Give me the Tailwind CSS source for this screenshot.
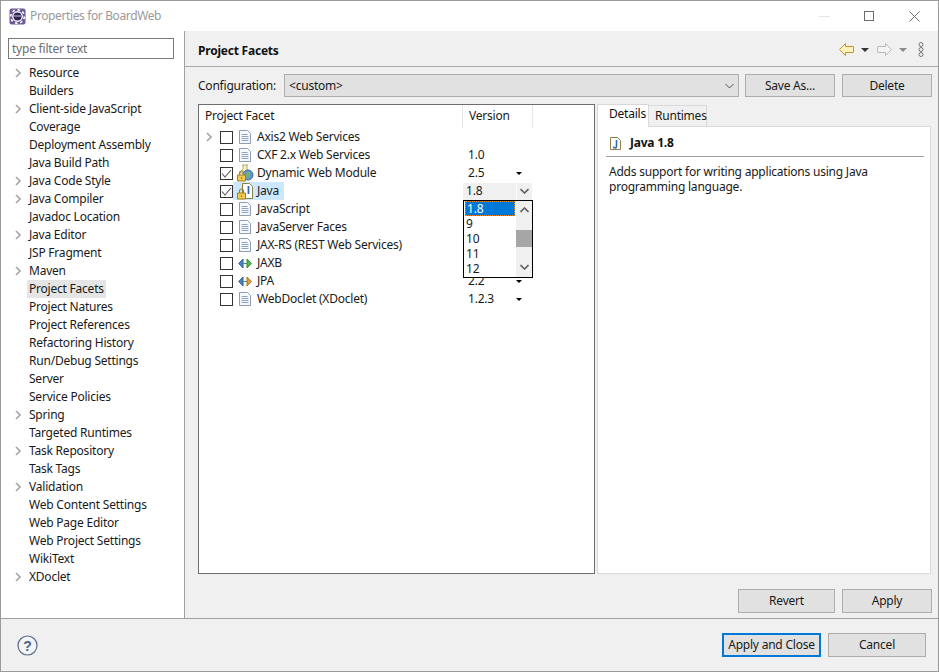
<!DOCTYPE html>
<html lang="en">
<head>
<meta charset="UTF-8">
<title>Properties for BoardWeb</title>
<script src="https://cdn.jsdelivr.net/npm/@tailwindcss/browser@4"></script>
</head>
<body class="bg-white">
<div class="w-[939px] h-[672px] flex flex-col border border-[#9a9a9a] overflow-hidden text-[12px] tracking-[-0.22px] leading-[18px] text-[#1a1a1a] font-['Noto_Sans','Open_Sans',sans-serif]">

  <!-- Title bar -->
  <div class="h-[30px] shrink-0 bg-white flex items-center pl-[8px]">
    <svg class="w-[17px] h-[17px]" viewBox="0 0 17 17">
      <rect x="0.500" y="0.500" width="16" height="16" rx="2" fill="#6a5a96"/>
      <circle cx="8.500" cy="8.500" r="6.800" fill="none" stroke="#fff" stroke-width="1.600" stroke-dasharray="2.500 2.800"/>
      <circle cx="8.500" cy="8.500" r="5.400" fill="#f4f4f8"/>
      <circle cx="8.500" cy="8.500" r="4" fill="#2c2550"/>
      <path d="M4.800 8h7.400" stroke="#9a94b8" stroke-width="1.500"/>
    </svg>
    <span class="ml-[4px] tracking-[-0.38px] text-[#9a9a9a]">Properties for BoardWeb</span>
    <div class="ml-auto flex items-center">
      <div class="w-[11px] h-px bg-[#e6e6e6] mr-[34px]"></div>
      <div class="w-[10px] h-[10px] border border-[#6e6e6e] mr-[35px]"></div>
      <svg class="w-[11px] h-[11px] mr-[18px]" viewBox="0 0 11 11"><path d="M.5.5l10 10M10.500.5l-10 10" stroke="#6e6e6e" fill="none"/></svg>
    </div>
  </div>

  <div class="flex-1 flex min-h-0">
    <!-- Left tree -->
    <div class="w-[184px] shrink-0 bg-white border-r border-[#a0a0a0] pt-[7px] px-[7px]">
      <div class="h-[21px] w-[166px] border border-[#7a7a7a] pl-[3px] flex items-center text-[#6d6d6d]">type filter text</div>
      <div id="tree" class="mt-[5px]"></div>
    </div>

    <!-- Right content -->
    <div class="flex-1 bg-[#f0f0f0] flex flex-col min-w-0">
      <div class="h-[36px] shrink-0 border-b border-[#a8a8a8] pl-[13px] flex items-center">
        <span class="mt-[4px] font-bold text-[#111]">Project Facets</span>
        <div class="ml-auto mt-[2px] flex items-center">
          <svg class="w-[15px] h-[13px]" viewBox="0 0 15 13"><path d="M6.500.5v3h7.500a.5.5 0 0 1 .5.5v5a.5.5 0 0 1-.5.5H6.500v3L.5 6.500z" fill="#fff3bd" stroke="#c9902a"/></svg>
          <div class="ml-[7px] w-0 h-0 border-x-[4px] border-x-transparent border-t-[4px] border-t-[#333]"></div>
          <svg class="ml-[8px] w-[15px] h-[13px]" viewBox="0 0 15 13"><path d="M8.500.5v3H1a.5.5 0 0 0-.5.5v5a.5.5 0 0 0 .5.5h7.500v3l6-6z" fill="#f3f3f3" stroke="#b8b8b8"/></svg>
          <div class="ml-[7px] w-0 h-0 border-x-[4px] border-x-transparent border-t-[4px] border-t-[#8a8a8a]"></div>
          <svg class="ml-[11px] mr-[14px] w-[6px] h-[15px]" viewBox="0 0 6 15" fill="none" stroke="#777"><circle cx="3" cy="2.500" r="2"/><circle cx="3" cy="7.500" r="2"/><circle cx="3" cy="12.500" r="2"/></svg>
        </div>
      </div>

      <div class="flex-1 min-h-0 flex flex-col pl-[13px] pr-[6px]">
        <!-- Configuration -->
        <div class="mt-[7px] h-[23px] shrink-0 flex items-center">
          <span class="w-[86px]">Configuration:</span>
          <div class="w-[455px] h-[23px] bg-[#e1e1e1] border border-[#adadad] pl-[4px] flex items-center">
            &lt;custom&gt;
            <svg class="ml-auto mr-[4px] w-[9px] h-[6px]" viewBox="0 0 9 6"><path d="M.5 1l4 4 4-4" stroke="#555" fill="none"/></svg>
          </div>
          <div class="ml-[6px] w-[90px] h-[23px] bg-[#e1e1e1] border border-[#adadad] flex items-center justify-center">Save As...</div>
          <div class="ml-[7px] w-[90px] h-[23px] bg-[#e1e1e1] border border-[#adadad] flex items-center justify-center">Delete</div>
        </div>

        <div class="mt-[7px] h-[470px] shrink-0 flex">
          <!-- Facet table -->
          <div class="relative w-[397px] h-[470px] bg-white border border-[#6e6e6e]">
            <div class="h-[23px] flex">
              <div class="w-[264px] h-full border-r border-[#e5e5e5] pl-[6px] pb-[2px] flex items-center">Project Facet</div>
              <div class="w-[70px] h-full border-r border-[#e5e5e5] pl-[6px] pb-[2px] flex items-center">Version</div>
            </div>
            <div id="rows"></div>

            <!-- open version dropdown -->
            <div class="absolute left-[264px] top-[95px] w-[70px] h-[78px] bg-white border border-black flex">
              <div class="w-[52px] pl-[1px] leading-[15px]">
                <div class="h-[15px] w-[50px] pl-[1px] bg-[#0078d7] text-white border border-dotted border-[#f08a24] flex items-center">1.8</div>
                <div class="pl-[1px]">9</div>
                <div class="pl-[1px]">10</div>
                <div class="pl-[1px]">11</div>
                <div class="pl-[1px]">12</div>
              </div>
              <div class="w-[16px] bg-[#f0f0f0] flex flex-col items-center">
                <svg class="mt-[6px] w-[9px] h-[6px]" viewBox="0 0 9 6"><path d="M.5 5l4-4 4 4" stroke="#606060" stroke-width="1.600" fill="none"/></svg>
                <div class="mt-[17px] w-full h-[17px] bg-[#a6a6a6]"></div>
                <svg class="mt-[17px] w-[9px] h-[6px]" viewBox="0 0 9 6"><path d="M.5 1l4 4 4-4" stroke="#606060" stroke-width="1.600" fill="none"/></svg>
              </div>
            </div>
          </div>

          <!-- Details panel -->
          <div class="ml-[2px] -mt-[1px] w-[334px] flex flex-col">
            <div class="h-[23px] flex items-end shrink-0">
              <div class="relative -mb-px w-[52px] h-[23px] bg-white border-t border-x border-[#d9d9d9] pl-[11px] pb-[5px] flex items-center text-[#111]">Details</div>
              <div class="w-[58px] h-[21px] border-t border-r border-[#d9d9d9] pl-[6px] flex items-center">Runtimes</div>
            </div>
            <div class="flex-1 bg-white border border-[#d9d9d9] pl-[8px] pr-[6px]">
              <div class="h-[30px] border-b border-[#a0a0a0] pt-[3px] flex items-center pl-[4px]">
                <svg class="w-[11px] h-[13px]" viewBox="0 0 11 13"><path d="M.5.5h7l3 3v9H.5z" fill="#fff" stroke="#8f8048"/><path d="M6.500 3v6.500a1.500 1.500 0 0 1-3 0" stroke="#2f6cb5" stroke-width="1.600" fill="none"/></svg>
                <span class="ml-[9px] font-bold text-[#111]">Java 1.8</span>
              </div>
              <p class="mt-[7px] ml-[3px] leading-[15px]">Adds support for writing applications using Java<br>programming language.</p>
            </div>
          </div>
        </div>

        <!-- Revert / Apply -->
        <div class="mt-[15px] h-[24px] shrink-0 flex justify-end">
          <div class="w-[97px] h-[24px] bg-[#e1e1e1] border border-[#adadad] flex items-center justify-center">Revert</div>
          <div class="ml-[7px] w-[90px] h-[24px] bg-[#e1e1e1] border border-[#adadad] flex items-center justify-center">Apply</div>
        </div>
      </div>
    </div>
  </div>

  <!-- Bottom bar -->
  <div class="h-[53px] shrink-0 bg-[#f0f0f0] border-t border-[#a0a0a0] flex items-center pl-[16px] pr-[12px]">
    <svg class="w-[21px] h-[21px]" viewBox="0 0 21 21"><circle cx="10.500" cy="10.500" r="9.500" fill="#f4f4f6" stroke="#5b6c8c" stroke-width="1.200"/><text x="10.500" y="15.500" text-anchor="middle" font-size="14" font-weight="700" font-family="Liberation Sans, sans-serif" fill="#4f6184">?</text></svg>
    <div class="ml-auto w-[99px] h-[24px] bg-[#e1e1e1] border-2 border-[#0078d7] flex items-center justify-center">Apply and Close</div>
    <div class="ml-[7px] w-[98px] h-[24px] bg-[#e1e1e1] border border-[#adadad] flex items-center justify-center">Cancel</div>
  </div>
</div>

<script>
  // Left tree entries: [label, has children]
  const treeItems = [
    ['Resource', true], ['Builders', false], ['Client-side JavaScript', true], ['Coverage', false],
    ['Deployment Assembly', false], ['Java Build Path', false], ['Java Code Style', true], ['Java Compiler', true],
    ['Javadoc Location', false], ['Java Editor', true], ['JSP Fragment', false], ['Maven', true],
    ['Project Facets', false], ['Project Natures', false], ['Project References', false], ['Refactoring History', false],
    ['Run/Debug Settings', false], ['Server', false], ['Service Policies', false], ['Spring', true],
    ['Targeted Runtimes', false], ['Task Repository', true], ['Task Tags', false], ['Validation', true],
    ['Web Content Settings', false], ['Web Page Editor', false], ['Web Project Settings', false], ['WikiText', false],
    ['XDoclet', true]
  ];

  const chevron = '<svg class="w-[7px] h-[10px]" viewBox="0 0 7 10"><path d="M1 1l4 4-4 4" stroke="#a6a6a6" stroke-width="1.700" fill="none"/></svg>';

  document.getElementById('tree').innerHTML = treeItems.map(([label, more]) => `
    <div class="h-[18px] flex items-center">
      <div class="w-[21px] pl-[7px] shrink-0">${more ? chevron : ''}</div>
      <span class="${label === 'Project Facets' ? 'bg-[#e5e5e5] px-[2px] -mx-[2px]' : ''}">${label}</span>
    </div>`).join('');

  const lock = '<path d="M.5 9.500h8v6h-8z" fill="#f0c94e" stroke="#a5801f"/><path d="M2.500 9.500V7.500a2 2 0 0 1 4 0v2" fill="none" stroke="#a5801f" stroke-width="1.200"/><path d="M4.500 11.500v2" stroke="#a5801f"/>';
  const icons = {
    doc: '<svg class="w-[12px] h-[14px]" viewBox="0 0 12 14"><path d="M.5.5h8l3 3v10H.5z" fill="#f7f9fc" stroke="#8c9db5"/><path d="M2.500 4.500h6M2.500 6.500h7M2.500 8.500h7M2.500 10.500h7" stroke="#8fa3c0"/></svg>',
    web: '<svg class="w-[18px] h-[18px]" viewBox="0 0 18 18"><path d="M6 1h6M7 1v3.500L4 9h10l-3-4.500V1" fill="#f6f0cf" stroke="#b5a86a"/><circle cx="12" cy="11" r="5" fill="#5e9cc9" stroke="#3d6d96"/><path d="M10 8.500h4l-1 5h-2z" fill="#7fb069"/><g transform="translate(1 1.500)">' + lock + '</g></svg>',
    java: '<svg class="w-[18px] h-[18px]" viewBox="0 0 18 18"><path d="M6.500 1.500h7l3 3v12h-10z" fill="#fff" stroke="#8f8048"/><path d="M12.500 4v8" stroke="#2f6cb5" stroke-width="1.800"/><g transform="translate(1 1.500)">' + lock + '</g></svg>',
    jaxb: '<svg class="w-[14px] h-[11px]" viewBox="0 0 14 11"><path d="M5 1L.7 5.500 5 10z" fill="#4a86c5" stroke="#2f6299"/><path d="M9 1l4.300 4.500L9 10z" fill="#4fc04a" stroke="#2f8f2a"/><path d="M5 5.500h4" stroke="#5a7a90"/></svg>',
    jpa: '<svg class="w-[14px] h-[11px]" viewBox="0 0 14 11"><path d="M5 1L.7 5.500 5 10z" fill="#4a86c5" stroke="#2f6299"/><path d="M9 1l4.300 4.500L9 10z" fill="#e5a33c" stroke="#a8741f"/><path d="M5 5.500h4" stroke="#5a7a90"/></svg>'
  };

  // Facet rows: label, icon, version, checked, has version caret
  const facets = [
    { label: 'Axis2 Web Services', icon: 'doc', expand: true },
    { label: 'CXF 2.x Web Services', icon: 'doc', version: '1.0' },
    { label: 'Dynamic Web Module', icon: 'web', version: '2.5', checked: true, caret: true },
    { label: 'Java', icon: 'java', version: '1.8', checked: true, active: true },
    { label: 'JavaScript', icon: 'doc' },
    { label: 'JavaServer Faces', icon: 'doc' },
    { label: 'JAX-RS (REST Web Services)', icon: 'doc' },
    { label: 'JAXB', icon: 'jaxb' },
    { label: 'JPA', icon: 'jpa', version: '2.2', caret: true },
    { label: 'WebDoclet (XDoclet)', icon: 'doc', version: '1.2.3', caret: true }
  ];

  const tick = '<svg class="w-[11px] h-[11px]" viewBox="0 0 11 11"><path d="M1 5.500l3 3.500 6-7" stroke="#555" stroke-width="1.100" fill="none"/></svg>';

  document.getElementById('rows').innerHTML = facets.map(f => `
    <div class="h-[18px] flex items-center">
      <div class="w-[21px] pl-[7px] shrink-0">${f.expand ? chevron : ''}</div>
      <div class="w-[13px] h-[13px] border border-[#333] shrink-0 flex items-center justify-center">${f.checked ? tick : ''}</div>
      <div class="w-[24px] h-[18px] shrink-0 flex items-center justify-center ${f.active ? 'bg-[#cce8ff]' : ''}">${icons[f.icon]}</div>
      <div class="w-[205px] h-[18px] shrink-0"><span class="inline-block h-[18px] ${f.active ? 'bg-[#cce8ff] pr-[5px]' : ''}">${f.label}</span></div>
      ${f.active
        ? '<div class="ml-[1px] w-[53px] h-[17px] bg-[#f0f0f0] pl-[3px] flex items-center">1.8</div><div class="ml-[1px] w-[15px] h-[17px] bg-[#f0f0f0] flex items-center justify-center"><svg class="w-[9px] h-[6px]" viewBox="0 0 9 6"><path d="M.5 1l4 4 4-4" stroke="#606060" stroke-width="1.600" fill="none"/></svg></div>'
        : `<div class="pl-[6px] w-[54px] shrink-0">${f.version || ''}</div>${f.caret ? '<div class="w-0 h-0 border-x-[3px] border-x-transparent border-t-[3px] border-t-black"></div>' : ''}`}
    </div>`).join('');
</script>
</body>
</html>
